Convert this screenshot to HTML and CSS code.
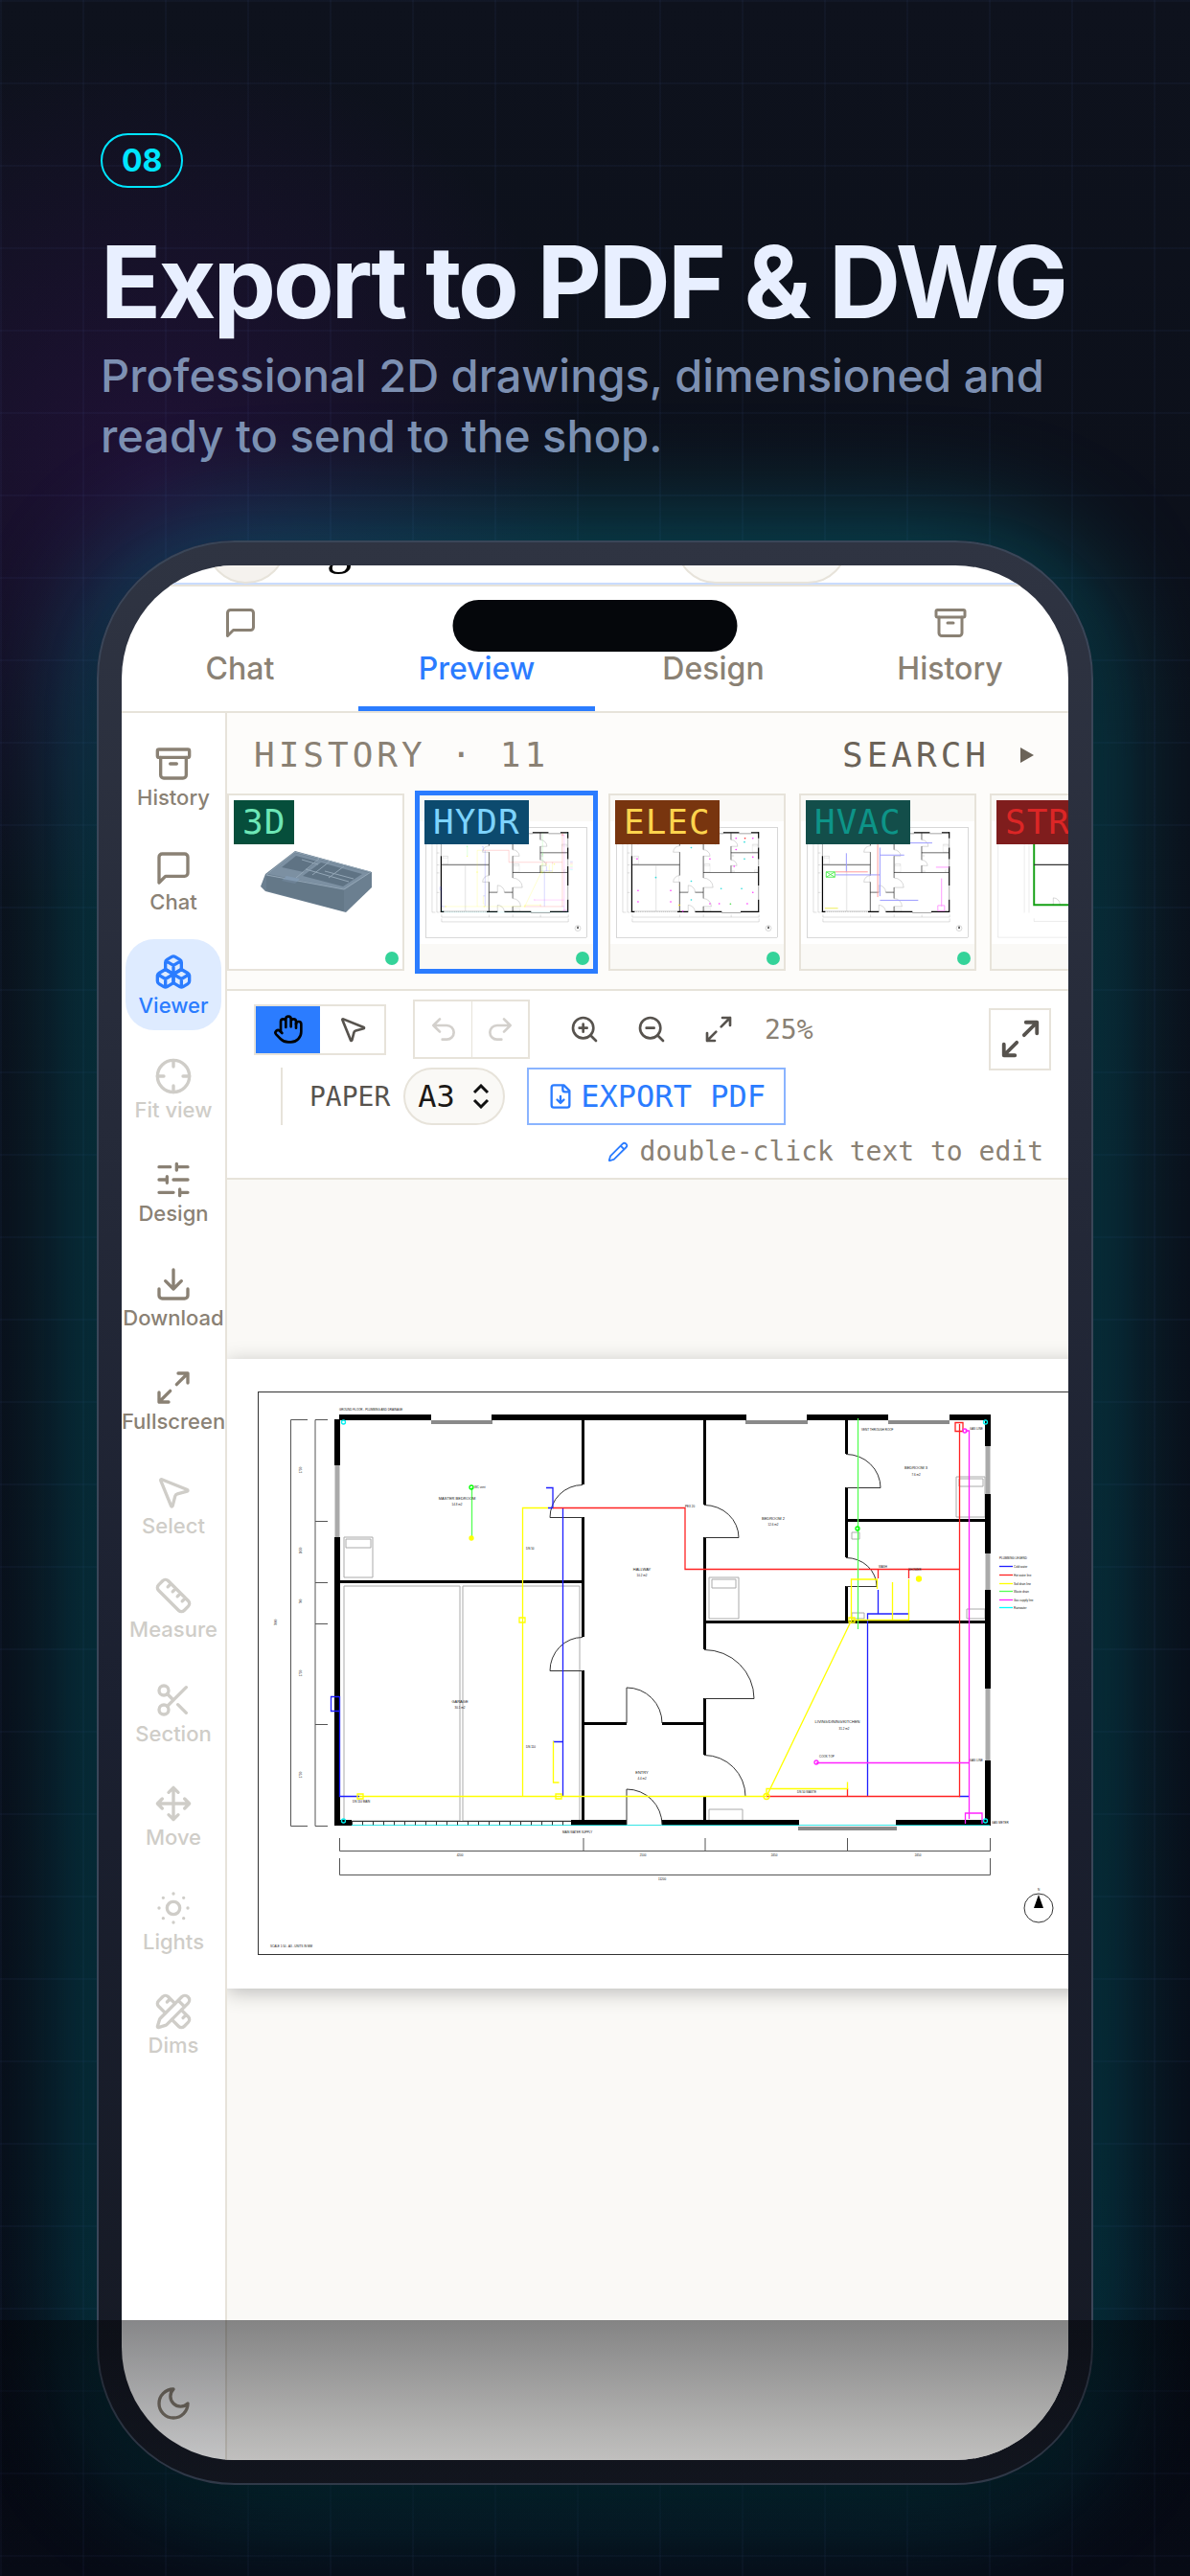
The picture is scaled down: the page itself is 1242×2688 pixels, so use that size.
FILE: index.html
```html
<!DOCTYPE html>
<html lang="en">
  <head>
    <meta charset="UTF-8" />
    <meta name="viewport" content="width=device-width, initial-scale=1.0" />
    <title>Export to PDF &amp; DWG</title>
    <link rel="stylesheet" href="styles.css" />
  </head>

  <body>
    <!-- shared icons and drawings -->
    <svg class="sprite" aria-hidden="true">
      <symbol id="i-chat" viewBox="0 0 24 24">
        <path d="M21 15a2 2 0 0 1-2 2H7l-4 4V5a2 2 0 0 1 2-2h14a2 2 0 0 1 2 2z" />
      </symbol>
      <symbol id="i-archive" viewBox="0 0 24 24">
        <rect x="2" y="3" width="20" height="5" rx="1" />
        <path d="M4 8v11a2 2 0 0 0 2 2h12a2 2 0 0 0 2-2V8M10 12h4" />
      </symbol>
      <symbol id="i-boxes" viewBox="0 0 24 24">
        <path d="M2.97 12.92A2 2 0 0 0 2 14.63v3.24a2 2 0 0 0 .97 1.71l3 1.8a2 2 0 0 0 2.06 0L12 19v-5.5l-5-3-4.03 2.42ZM7 16.5l-4.74-2.85M7 16.5l5-3M7 16.5v5.17" />
        <path d="M12 13.5V19l3.97 2.38a2 2 0 0 0 2.06 0l3-1.8a2 2 0 0 0 .97-1.71v-3.24a2 2 0 0 0-.97-1.71L17 10.5l-5 3ZM17 16.5l-5-3M17 16.5l4.74-2.85M17 16.5v5.17" />
        <path d="M7.97 4.42A2 2 0 0 0 7 6.13v4.37l5 3 5-3V6.13a2 2 0 0 0-.97-1.71l-3-1.8a2 2 0 0 0-2.06 0l-3 1.8ZM12 8 7.26 5.15M12 8l4.74-2.85M12 13.5V8" />
      </symbol>
      <symbol id="i-crosshair" viewBox="0 0 24 24">
        <circle cx="12" cy="12" r="10" />
        <path d="M22 12h-4M6 12H2M12 6V2M12 22v-4" />
      </symbol>
      <symbol id="i-sliders" viewBox="0 0 24 24">
        <path d="M21 4h-7M10 4H3M21 12h-9M8 12H3M21 20h-5M12 20H3M14 2v4M8 10v4M16 18v4" />
      </symbol>
      <symbol id="i-download" viewBox="0 0 24 24">
        <path d="M21 15v4a2 2 0 0 1-2 2H5a2 2 0 0 1-2-2v-4M7 10l5 5 5-5M12 15V3" />
      </symbol>
      <symbol id="i-expand" viewBox="0 0 24 24">
        <path d="M15 3h6v6M21 3l-7 7M3 21l7-7M9 21H3v-6" />
      </symbol>
      <symbol id="i-pointer" viewBox="0 0 24 24">
        <path d="M4.04 4.69a.5.5 0 0 1 .65-.65l16 6.5a.5.5 0 0 1-.06.95l-6.13 1.58a2 2 0 0 0-1.43 1.44l-1.58 6.12a.5.5 0 0 1-.95.06z" />
      </symbol>
      <symbol id="i-ruler" viewBox="0 0 24 24">
        <path d="M21.3 15.3a2.4 2.4 0 0 1 0 3.4l-2.6 2.6a2.4 2.4 0 0 1-3.4 0L2.7 8.7a2.41 2.41 0 0 1 0-3.4l2.6-2.6a2.41 2.41 0 0 1 3.4 0ZM14.5 12.5l2-2M11.5 9.5l2-2M8.5 6.5l2-2M17.5 15.5l2-2" />
      </symbol>
      <symbol id="i-scissors" viewBox="0 0 24 24">
        <circle cx="6" cy="6" r="3" />
        <circle cx="6" cy="18" r="3" />
        <path d="M8.12 8.12 12 12M20 4 8.12 15.88M14.8 14.8 20 20" />
      </symbol>
      <symbol id="i-move" viewBox="0 0 24 24">
        <path d="M12 2v20M15 19l-3 3-3-3M19 9l3 3-3 3M2 12h20M5 9l-3 3 3 3M9 5l3-3 3 3" />
      </symbol>
      <symbol id="i-sun" viewBox="0 0 24 24">
        <circle cx="12" cy="12" r="4" />
        <path d="M12 3h.01M12 21h.01M3 12h.01M21 12h.01M5.6 5.6h.01M18.4 5.6h.01M5.6 18.4h.01M18.4 18.4h.01" />
      </symbol>
      <symbol id="i-dims" viewBox="0 0 24 24">
        <path d="M13 7 8.7 2.7a2.41 2.41 0 0 0-3.4 0L2.7 5.3a2.41 2.41 0 0 0 0 3.4L7 13M8 6l2-2M18 16l2-2M17 11l4.3 4.3c.94.94.94 2.46 0 3.4l-2.6 2.6c-.94.94-2.46.94-3.4 0L11 17" />
        <path d="M21.17 6.81a1 1 0 0 0-3.99-3.99L3.84 16.17a2 2 0 0 0-.5.83l-1.32 4.35a.5.5 0 0 0 .62.62l4.35-1.32a2 2 0 0 0 .83-.5zM15 5l4 4" />
      </symbol>
      <symbol id="i-moon" viewBox="0 0 24 24">
        <path d="M12 3a6 6 0 0 0 9 9 9 9 0 1 1-9-9Z" />
      </symbol>
      <symbol id="i-hand" viewBox="0 0 24 24">
        <path d="M18 11V6a2 2 0 0 0-4 0M14 10V4a2 2 0 0 0-4 0v2M10 10.5V6a2 2 0 0 0-4 0v8" />
        <path d="M18 8a2 2 0 1 1 4 0v6a8 8 0 0 1-8 8h-2c-2.8 0-4.5-.86-5.99-2.34l-3.6-3.6a2 2 0 0 1 2.83-2.82L7 15" />
      </symbol>
      <symbol id="i-undo" viewBox="0 0 24 24">
        <path d="M9 14 4 9l5-5M4 9h10.5a5.5 5.5 0 0 1 0 11H11" />
      </symbol>
      <symbol id="i-redo" viewBox="0 0 24 24">
        <path d="m15 14 5-5-5-5M20 9H9.5a5.5 5.5 0 0 0 0 11H13" />
      </symbol>
      <symbol id="i-zoom-in" viewBox="0 0 24 24">
        <circle cx="11" cy="11" r="8" />
        <path d="m21 21-4.35-4.35M11 8v6M8 11h6" />
      </symbol>
      <symbol id="i-zoom-out" viewBox="0 0 24 24">
        <circle cx="11" cy="11" r="8" />
        <path d="m21 21-4.35-4.35M8 11h6" />
      </symbol>
      <symbol id="i-file-down" viewBox="0 0 24 24">
        <path d="M15 2H6a2 2 0 0 0-2 2v16a2 2 0 0 0 2 2h12a2 2 0 0 0 2-2V7ZM14 2v4a2 2 0 0 0 2 2h4M12 18v-6M9 15l3 3 3-3" />
      </symbol>
      <symbol id="i-pencil" viewBox="0 0 24 24">
        <path d="M21.17 6.81a1 1 0 0 0-3.99-3.99L3.84 16.17a2 2 0 0 0-.5.83l-1.32 4.35a.5.5 0 0 0 .62.62l4.35-1.32a2 2 0 0 0 .83-.5zM15 5l4 4" />
      </symbol>

      <!-- floor plan without services -->
      <symbol id="plan" viewBox="237 1419 929 657">
        <rect x="237" y="1419" width="929" height="657" fill="#fff" />
        <rect x="269.5" y="1453.5" width="864" height="587" class="thin" />
        <g class="furniture">
          <path d="M359 1605h30v42h-30zM361 1607h26v9h-26zM359 1656h121v245H359zM483 1656h122v245H483z" />
          <path d="M740 1647h31v43h-31zM743 1649h25v9h-25zM998 1542h30v42h-30zM1001 1544h25v8h-25z" />
          <path d="M1009 1680h19v10h-19zM740 1889h35v12h-35zM889 1600h8v7h-8zM889 1684h13v6h-13z" />
        </g>
        <g class="window">
          <path d="M450 1485h64M778 1485h65M927 1485h64M833 1909h103" />
          <path d="M352 1530v75M1031 1510v50M1031 1622v38M1031 1763v75" class="wide" />
        </g>
        <g class="outer">
          <path d="M354 1480h96M513 1480h266M842 1480h85M991 1480h42" />
          <path d="M352 1482v48M352 1605v301M1031 1477v33M1031 1560v62M1031 1660v103M1031 1838v68" />
          <path d="M349 1903h18M596 1903h58M691 1903h143M935 1903h98" />
        </g>
        <path class="hatch" d="M367 1903.5h229" />
        <path class="thin" d="M367 1901.5h229" />
        <g class="inner">
          <path d="M608.5 1482v68M608.5 1584v125M608.5 1744v162M735.5 1482v89M735.5 1605v117M735.5 1773v59M735.5 1875v31" />
          <path d="M883.5 1482v36M883.5 1553v73M883.5 1656v38" />
          <path d="M355 1651.5h253M883 1587.5h146M735 1693.5h294M608 1799.5h46M691 1799.5h44" />
        </g>
        <g class="thin">
          <path d="M608 1584.5h-34a34 34 0 0 1 34-34M608 1744.5h-34a34 35 0 0 1 34-35" />
          <path d="M735 1605.5h36a36 34 0 0 0-36-34M735 1773.5h52a52 51 0 0 0-52-51M735 1875.5h43a43 43 0 0 0-43-43" />
          <path d="M883 1553.5h36a36 35 0 0 0-36-35M883 1656.5h32a32 30 0 0 0-32-30" />
          <path d="M654 1799v-37a37 37 0 0 1 37 37M654 1905v-37a37 37 0 0 1 37 37" />
        </g>
        <g class="dim">
          <path d="M321 1482.5h-17.5v424H321" />
          <path d="M342 1482.5h-13v424h13M329 1588.5h13M329 1652.5h13M329 1695.5h13M329 1800.5h13" />
          <path d="M354.5 1919v13.5h679V1919M609 1919v13M736 1919v13M884.5 1919v13" />
          <path d="M354.5 1940v17.5h679V1940" />
        </g>
        <circle cx="1084" cy="1992" r="15" class="thin" />
        <path d="M1084 1978l5 14h-10z" fill="#000" />
      </symbol>

      <!-- water and drainage layer -->
      <symbol id="plumbing" viewBox="237 1419 929 657">
        <g class="pipe">
          <path stroke="#0dd" stroke-width=".8" d="M367 1905.5h666" />
          <path stroke="#1f1fff" d="M587.5 1574v301M570 1553.5h7v21h-5M577 1818.5h10M354 1771.5h-8.5v15h8.5M354.5 1771v104.5H375M905.5 1875v-190H948M916.5 1660v25M1001 1875.5h10" />
          <path stroke="#f22" d="M577 1574.5h138v64h286M1001.5 1487v388.5H800M884.5 1875v-8M916.5 1638v10M948.5 1638v10M997 1485.5h8v9h-8z" />
          <path stroke="#f2f" d="M1011.5 1899v-405h-4M852 1840.5h159M1007.5 1904v-11H1025v11" />
          <circle stroke="#f2f" cx="1007" cy="1494" r="2" />
          <circle stroke="#f2f" cx="852" cy="1840" r="2" />
          <path stroke="#5f5" d="M895.5 1481v220M492.5 1553v53" />
          <circle stroke="#0f0" cx="492" cy="1553" r="2" />
          <circle stroke="#0f0" cx="895" cy="1596" r="2" />
          <path stroke="#ff0" d="M572 1574.5h-26.5v301M375 1875.5h425l89-184.5M577.5 1818v43h6M888.5 1691v-42h27v10M931.5 1652v39M948.5 1649v42.5H889M800 1875v-7.5h84.5v-7" />
          <g stroke="#ff0">
            <path d="M373 1873h6v5h-6zM542 1689h6v5h-6zM580 1873h6v5h-6zM886 1689h6v5h-6z" />
            <circle cx="800" cy="1875.5" r="3" />
            <circle cx="959" cy="1648.5" r="2.5" fill="#ff0" />
            <circle cx="492" cy="1606" r="2" fill="#ff0" />
          </g>
          <g stroke="#0ee">
            <circle cx="358.5" cy="1485" r="2" />
            <circle cx="358.5" cy="1901" r="2" />
            <circle cx="1028.5" cy="1485" r="2" />
            <circle cx="1028.5" cy="1901" r="2" />
          </g>
          <path stroke="#1f1fff" d="M1043 1635.5h14" />
          <path stroke="#f22" d="M1043 1644.5h14" />
          <path stroke="#ff0" d="M1043 1653.5h14" />
          <path stroke="#5f5" d="M1043 1661.5h14" />
          <path stroke="#f2f" d="M1043 1670.5h14" />
          <path stroke="#0ff" d="M1043 1678.5h14" />
        </g>
      </symbol>

      <!-- sockets and lamps -->
      <symbol id="electric" viewBox="237 1419 929 657">
        <g class="spots">
          <path stroke="#f4f" d="M385 1540h1M380 1620h1M385 1790h1M385 1850h1M560 1790h1M560 1850h1M625 1900h1M770 1500h1M770 1620h1M910 1510h1M1000 1510h1M910 1570h1M900 1660h1M1000 1610h1M770 1860h1M820 1860h1M970 1860h1M1000 1800h1" />
          <path stroke="#3dd" d="M480 1530h1M480 1720h1M670 1560h1M670 1740h1M670 1840h1M800 1540h1M955 1530h1M955 1620h1M830 1780h1M940 1780h1" />
          <path stroke="#f33" d="M810 1515h1M958 1510h1" />
          <path stroke="#fd2" d="M606 1868h1" />
          <path stroke="#5d5" d="M880 1862h1" />
        </g>
      </symbol>

      <!-- ducts -->
      <symbol id="ducts" viewBox="237 1419 929 657">
        <g class="duct">
          <path stroke="#99f" d="M480 1590v100M420 1706h240M660 1560v260M660 1842h205M660 1600h130M790 1535h150" />
          <path stroke="#f99" d="M420 1690h175M648 1540v285" />
          <path stroke="#f9f" d="M960 1665h70M990 1725v150M970 1870h36v28h-36z" />
          <path stroke="#5e5" d="M372 1690h46v28h-46zM372 1690l46 28M418 1690l-46 28" />
          <path stroke="#ee5" d="M365 1885h70" />
        </g>
      </symbol>
    </svg>

    <main class="poster">
      <header class="intro">
        <span class="step">08</span>
        <h1>Export to PDF &amp; DWG</h1>
        <p>Professional 2D drawings, dimensioned and ready to send to the shop.</p>
      </header>

      <div class="phone">
        <div class="island"></div>
        <div class="screen">
          <div class="topbar">
            <span class="avatar"></span>
            <span class="brand">g</span>
            <span class="pill"></span>
          </div>

          <nav class="tabs">
            <button type="button"><svg class="icon"><use href="#i-chat" /></svg>Chat</button>
            <button type="button" class="active"><svg class="icon"></svg>Preview</button>
            <button type="button"><svg class="icon"></svg>Design</button>
            <button type="button"><svg class="icon"><use href="#i-archive" /></svg>History</button>
          </nav>

          <div class="workspace">
            <aside class="rail">
              <div class="rail-list">
                <button type="button"><svg class="icon"><use href="#i-archive" /></svg>History</button>
                <button type="button"><svg class="icon"><use href="#i-chat" /></svg>Chat</button>
                <button type="button" class="active"><svg class="icon"><use href="#i-boxes" /></svg>Viewer</button>
                <button type="button" disabled><svg class="icon"><use href="#i-crosshair" /></svg>Fit view</button>
                <button type="button"><svg class="icon"><use href="#i-sliders" /></svg>Design</button>
                <button type="button"><svg class="icon"><use href="#i-download" /></svg>Download</button>
                <button type="button"><svg class="icon"><use href="#i-expand" /></svg>Fullscreen</button>
                <button type="button" disabled><svg class="icon"><use href="#i-pointer" /></svg>Select</button>
                <button type="button" disabled><svg class="icon"><use href="#i-ruler" /></svg>Measure</button>
                <button type="button" disabled><svg class="icon"><use href="#i-scissors" /></svg>Section</button>
                <button type="button" disabled><svg class="icon"><use href="#i-move" /></svg>Move</button>
                <button type="button" disabled><svg class="icon"><use href="#i-sun" /></svg>Lights</button>
                <button type="button" disabled><svg class="icon"><use href="#i-dims" /></svg>Dims</button>
              </div>
              <button type="button" class="theme" aria-label="Dark mode"><svg class="icon"><use href="#i-moon" /></svg></button>
            </aside>

            <section class="main">
              <div class="history">
                <div class="history-head">
                  <h2>HISTORY · 11</h2>
                  <button type="button" class="search">SEARCH <i class="caret"></i></button>
                </div>
                <div class="thumbs">
                  <button type="button" class="thumb model">
                    <svg viewBox="0 0 181 181">
                      <path fill="#6b7f90" d="M69 58l80 22v16l-27 26-84-22-5-5 5-13z" />
                      <path fill="#7c90a2" d="M69 60l78 21-26 17-80-16z" />
                      <path fill="#5f7384" d="M70 63l22 6-14 11-23-5zM96 70l43 12-20 13-42-11z" />
                      <path fill="none" stroke="#93a6b6" d="M69 59l79 21-28 18-81-15zM94 66l-24 20M80 77l45 13M105 69l-18 14M120 74l-16 12M76 67l17 5M100 79l30 8" />
                      <path fill="#8299b0" d="M60 84l14 3-5 5-14-3z" />
                      <path fill="#5f7384" d="M39 84l81 15v22l-81-22z" opacity=".6" />
                    </svg>
                    <span class="tag green">3D</span><i class="dot"></i>
                  </button>
                  <button type="button" class="thumb selected">
                    <svg viewBox="0 0 929 657"><use href="#plan" /><use href="#plumbing" opacity=".7" /></svg>
                    <span class="tag blue">HYDR</span><i class="dot"></i>
                  </button>
                  <button type="button" class="thumb">
                    <svg viewBox="0 0 929 657"><use href="#plan" /><use href="#electric" /></svg>
                    <span class="tag amber">ELEC</span><i class="dot"></i>
                  </button>
                  <button type="button" class="thumb">
                    <svg viewBox="0 0 929 657"><use href="#plan" /><use href="#ducts" /></svg>
                    <span class="tag teal">HVAC</span><i class="dot"></i>
                  </button>
                  <button type="button" class="thumb">
                    <svg viewBox="0 0 929 657">
                      <rect width="929" height="657" fill="#fff" />
                      <path class="thin" d="M34 34h865v588H34zM175 100v390M200 100v390M227 520v16h600" opacity=".5" />
                      <path class="frame" d="M227 60h600v388H227z" />
                      <path class="pipe-wide" stroke="#eb4" d="M227 233h260" />
                      <path class="thin" d="M330 448v-38a36 36 0 0 1 36 38" />
                    </svg>
                    <span class="tag red">STRUC</span><i class="dot"></i>
                  </button>
                </div>
              </div>

              <div class="toolbar">
                <div class="tool-row">
                  <div class="group modes">
                    <button type="button" class="active" aria-label="Pan"><svg class="icon"><use href="#i-hand" /></svg></button>
                    <button type="button" aria-label="Pick"><svg class="icon"><use href="#i-pointer" /></svg></button>
                  </div>
                  <div class="group undo">
                    <button type="button" disabled aria-label="Undo"><svg class="icon"><use href="#i-undo" /></svg></button>
                    <button type="button" disabled aria-label="Redo"><svg class="icon"><use href="#i-redo" /></svg></button>
                  </div>
                  <div class="zoom">
                    <button type="button" aria-label="Zoom in"><svg class="icon"><use href="#i-zoom-in" /></svg></button>
                    <button type="button" aria-label="Zoom out"><svg class="icon"><use href="#i-zoom-out" /></svg></button>
                    <button type="button" aria-label="Fit"><svg class="icon"><use href="#i-expand" /></svg></button>
                    <output>25%</output>
                  </div>
                  <button type="button" class="maximize" aria-label="Maximize"><svg class="icon"><use href="#i-expand" /></svg></button>
                </div>
                <div class="tool-row paper-row">
                  <label for="paper">PAPER</label>
                  <span class="select">
                    <select id="paper">
                      <option>A3</option>
                    </select>
                    <svg class="chevrons" viewBox="0 0 18 26"><path d="M2 9l7-7 7 7M2 17l7 7 7-7" /></svg>
                  </span>
                  <button type="button" class="export"><svg class="icon"><use href="#i-file-down" /></svg>EXPORT PDF</button>
                </div>
                <p class="hint"><svg class="icon"><use href="#i-pencil" /></svg>double-click text to edit</p>
              </div>

              <div class="canvas">
                <svg class="sheet" viewBox="237 1419 929 657">
                  <use href="#plan" x="237" y="1419" width="929" height="657" />
                  <use href="#plumbing" x="237" y="1419" width="929" height="657" />
                  <g class="note">
                    <text x="354" y="1473">GROUND FLOOR - PLUMBING AND DRAINAGE</text>
                    <text x="282" y="2033">SCALE 1:50 - A3 - UNITS IN MM</text>
                    <text x="587" y="1914">MAIN WATER SUPPLY</text>
                    <text x="1043" y="1628">PLUMBING LEGEND</text>
                    <text x="1058" y="1637">Cold water</text>
                    <text x="1058" y="1646">Hot water line</text>
                    <text x="1058" y="1655">Soil drain line</text>
                    <text x="1058" y="1663">Waste drain</text>
                    <text x="1058" y="1672">Gas supply line</text>
                    <text x="1058" y="1680">Rainwater</text>
                    <text x="899" y="1494">VENT THROUGH ROOF</text>
                    <text x="495" y="1554">WC vent</text>
                    <text x="549" y="1618">DN 50</text>
                    <text x="549" y="1825">DN 110</text>
                    <text x="715" y="1574">PEX 20</text>
                    <text x="855" y="1835">COOK TOP</text>
                    <text x="1012" y="1493">GAS LINE</text>
                    <text x="1012" y="1839">GAS LINE</text>
                    <text x="917" y="1637">WASH</text>
                    <text x="948" y="1640">SHOWER</text>
                    <text x="832" y="1872">DN 50 WASTE</text>
                    <text x="1035" y="1904">GAS METER</text>
                    <text x="368" y="1882">DN 110 MAIN</text>
                    <g class="mid">
                      <text x="477" y="1566" class="room">MASTER BEDROOM</text>
                      <text x="477" y="1572">14.8 m2</text>
                      <text x="670" y="1640" class="room">HALLWAY</text>
                      <text x="670" y="1646">10.2 m2</text>
                      <text x="480" y="1778" class="room">GARAGE</text>
                      <text x="480" y="1784">30.1 m2</text>
                      <text x="670" y="1852" class="room">ENTRY</text>
                      <text x="670" y="1858">4.4 m2</text>
                      <text x="807" y="1587" class="room">BEDROOM 2</text>
                      <text x="807" y="1593">12.6 m2</text>
                      <text x="956" y="1534" class="room">BEDROOM 3</text>
                      <text x="956" y="1541">7.6 m2</text>
                      <text x="874" y="1799" class="room">LIVING/DINING/KITCHEN</text>
                      <text x="881" y="1806">31.2 m2</text>
                      <text x="480" y="1938">4200</text>
                      <text x="671" y="1938">2100</text>
                      <text x="808" y="1938">2450</text>
                      <text x="958" y="1938">2450</text>
                      <text x="691" y="1963">11200</text>
                      <text x="1084" y="1974">N</text>
                      <text transform="translate(315 1535) rotate(-90)">1750</text>
                      <text transform="translate(315 1619) rotate(-90)">1050</text>
                      <text transform="translate(315 1672) rotate(-90)">700</text>
                      <text transform="translate(315 1747) rotate(-90)">1750</text>
                      <text transform="translate(315 1853) rotate(-90)">1750</text>
                      <text transform="translate(289 1694) rotate(-90)">7000</text>
                    </g>
                  </g>
                </svg>
              </div>
            </section>
          </div>
        </div>
      </div>
      <div class="fade"></div>
    </main>
  </body>
</html>
```
FILE: styles.css
```css
:root {
  --line: #e7e3da;
  --muted: #8a8174;
  --ink: #57534e;
  --accent: #2b7cff;
  --paper: #faf9f6;
  --mono: "DejaVu Sans Mono", monospace;
}

* {
  box-sizing: border-box;
  margin: 0;
  padding: 0;
}

body {
  background-color: #0b0f19;
  font-family: Inter, sans-serif;
}

button,
select {
  background: none;
  border: 0;
  color: inherit;
  font: inherit;
}

.sprite {
  height: 0;
  position: absolute;
  width: 0;
}

.icon {
  display: block;
  fill: none;
  flex: none;
  height: 32px;
  stroke: currentColor;
  stroke-linecap: round;
  stroke-linejoin: round;
  stroke-width: 2;
  width: 32px;
}

/* poster */
.poster {
  background-image:
    linear-gradient(rgba(90, 120, 200, 0.05) 2px, transparent 2px),
    linear-gradient(90deg, rgba(90, 120, 200, 0.05) 2px, transparent 2px),
    radial-gradient(circle 460px at 160px 500px, rgba(100, 20, 150, 0.22), transparent),
    linear-gradient(#0e121d, #0b0f19 30%, #070b16);
  background-size: 86px 86px, 86px 86px, auto, auto;
  display: flex;
  flex-direction: column;
  min-height: 100vh;
  overflow: hidden;
  padding: 139px 101px 95px;
  position: relative;
}

.intro {
  padding: 0 4px;
}

.step {
  border: 2px solid #00e5ff;
  border-radius: 29px;
  color: #00e5ff;
  display: inline-block;
  font-size: 32px;
  font-weight: 700;
  line-height: 53px;
  padding: 0 20px;
}

h1 {
  color: #e8efff;
  font-size: 104px;
  font-weight: 700;
  letter-spacing: -3px;
  line-height: 108px;
  margin-top: 44px;
  white-space: nowrap;
}

.intro p {
  color: #7d90b2;
  font-size: 47px;
  font-weight: 500;
  line-height: 63px;
  margin-top: 12px;
}

.phone {
  background: linear-gradient(#2f3442, #1b2030 60%, #151923);
  border: 2px solid #3a4658;
  border-radius: 144px;
  box-shadow: 0 24px 50px rgba(0, 0, 0, 0.35), 0 0 130px rgba(0, 229, 255, 0.36);
  display: flex;
  flex: 1;
  flex-direction: column;
  margin-top: 78px;
  padding: 24px;
  position: relative;
}

.island {
  background-color: #05070b;
  border-radius: 27px;
  height: 54px;
  left: 50%;
  position: absolute;
  top: 60px;
  transform: translateX(-50%);
  width: 297px;
  z-index: 2;
}

.screen {
  background-color: #fff;
  border-radius: 118px;
  display: flex;
  flex: 1;
  flex-direction: column;
  overflow: hidden;
}

.fade {
  background: linear-gradient(rgba(3, 4, 8, 0.48), rgba(3, 4, 8, 0.03));
  bottom: 0;
  height: 267px;
  left: 0;
  position: absolute;
  right: 0;
}

/* scrolled header */
.topbar {
  align-items: flex-end;
  border-bottom: 2px solid var(--line);
  box-shadow: inset 0 -2px #c9dcff;
  display: flex;
  flex: none;
  height: 22px;
  overflow: hidden;
  padding: 0 230px 1px 88px;
}

.avatar,
.pill {
  background-color: #f5f2ee;
  border: 2px solid var(--line);
  border-radius: 44px;
  height: 84px;
  width: 84px;
}

.brand {
  font: 52px/40px "Liberation Serif", serif;
  margin: 0 0 18px 42px;
}

.pill {
  background-color: var(--paper);
  margin-left: auto;
  width: 180px;
}

.tabs {
  border-bottom: 2px solid var(--line);
  display: flex;
  flex: none;
}

.tabs button {
  align-items: center;
  border-bottom: 5px solid transparent;
  color: var(--muted);
  display: flex;
  flex: 1;
  flex-direction: column;
  font-size: 32px;
  font-weight: 500;
  gap: 10px;
  line-height: 40px;
  padding: 20px 0 19px;
}

.tabs .active {
  border-color: var(--accent);
  color: var(--accent);
}

.tabs .icon {
  height: 36px;
  width: 36px;
}

.workspace {
  display: flex;
  flex: 1;
  min-height: 0;
}

/* left rail */
.rail {
  align-items: center;
  border-right: 2px solid var(--line);
  color: var(--muted);
  display: flex;
  flex: none;
  flex-direction: column;
  justify-content: space-between;
  padding: 19px 4px 29px;
  width: 110px;
}

.rail-list {
  display: flex;
  flex-direction: column;
  height: 1397px;
  justify-content: space-between;
  width: 100%;
}

.rail button {
  align-items: center;
  border-radius: 30px;
  display: flex;
  flex-direction: column;
  font-size: 22px;
  font-weight: 500;
  gap: 1px;
  height: 95px;
  line-height: 28px;
  padding-top: 14px;
}

.rail .active {
  background-color: #deebff;
  color: var(--accent);
}

.rail button:disabled {
  color: #cfcdc8;
}

.rail .icon {
  height: 40px;
  width: 40px;
}

.rail .theme {
  height: 64px;
}

/* history strip */
.main {
  display: flex;
  flex: 1;
  flex-direction: column;
  min-width: 0;
}

.history {
  background-color: #fdfcfa;
  border-bottom: 2px solid var(--line);
  padding-bottom: 15px;
}

.history-head {
  align-items: center;
  color: var(--muted);
  display: flex;
  font-family: var(--mono);
  font-size: 36px;
  justify-content: space-between;
  letter-spacing: 4px;
  line-height: 44px;
  padding: 22px 36px 18px 28px;
}

.history h2 {
  font-size: 36px;
  font-weight: 400;
}

.search {
  align-items: center;
  color: #6b6358;
  display: flex;
  gap: 32px;
  letter-spacing: 4px;
}

.caret {
  border: 8px solid transparent;
  border-left: 14px solid #6b6358;
  border-right: 0;
}

.thumbs {
  display: flex;
  gap: 14px;
  overflow: hidden;
  margin-top: -4px;
  padding: 4px 0;
}

.thumb {
  align-items: center;
  background-color: var(--paper);
  border: 2px solid var(--line);
  display: flex;
  flex: none;
  height: 185px;
  position: relative;
  width: 185px;
}

.thumb svg {
  display: block;
  width: 100%;
}

.model {
  background-color: #fff;
}

.selected {
  border-color: var(--accent);
  box-shadow: 0 0 0 3px var(--accent);
}

.tag {
  font-family: var(--mono);
  font-size: 36px;
  left: 5px;
  letter-spacing: 1px;
  line-height: 46px;
  padding: 0 9px;
  position: absolute;
  top: 5px;
}

.green {
  background-color: #064e3b;
  color: #6ee7b7;
}

.blue {
  background-color: #0c4a6e;
  color: #7dd3fc;
}

.amber {
  background-color: #78350f;
  color: #fcd34d;
}

.teal {
  background-color: #134e4a;
  color: #0d9488;
}

.red {
  background-color: #7f1d1d;
  color: #dc2626;
}

.dot {
  background-color: #34d399;
  border-radius: 50%;
  bottom: 4px;
  height: 14px;
  position: absolute;
  right: 4px;
  width: 14px;
}

/* toolbar */
.toolbar {
  border-bottom: 2px solid var(--line);
  color: var(--ink);
  font-family: var(--mono);
  font-size: 28px;
  padding: 9px 18px 9px 28px;
}

.tool-row {
  align-items: center;
  display: flex;
}

.group {
  border: 2px solid var(--line);
  display: flex;
}

.group button {
  display: grid;
  height: 49px;
  place-items: center;
  width: 67px;
}

.modes .active {
  background-color: var(--accent);
  color: #000;
}

.undo {
  margin-left: 28px;
}

.undo button {
  height: 58px;
  width: 59px;
}

.undo button + button {
  border-left: 1px solid var(--line);
}

.undo button:disabled {
  color: #d3d0cc;
}

.zoom {
  align-items: center;
  color: var(--muted);
  display: flex;
  gap: 38px;
  margin-left: 41px;
}

.zoom button {
  color: var(--ink);
}

.zoom output {
  margin-left: -6px;
}

.maximize {
  border: 2px solid var(--line);
  display: grid;
  height: 65px;
  margin-left: auto;
  margin-bottom: -20px;
  place-items: center;
  width: 65px;
}

.maximize .icon {
  height: 46px;
  width: 46px;
}

.paper-row {
  border-left: 2px solid var(--line);
  height: 60px;
  margin: 9px 0 0 28px;
  padding-left: 28px;
}

.select {
  align-items: center;
  background-color: var(--paper);
  border: 2px solid var(--line);
  border-radius: 30px;
  display: flex;
  height: 60px;
  margin-left: 14px;
  position: relative;
  width: 106px;
}

.select select {
  appearance: none;
  color: #1c1917;
  font-size: 32px;
  height: 100%;
  padding-left: 13px;
  width: 100%;
}

.chevrons {
  fill: none;
  height: 26px;
  pointer-events: none;
  position: absolute;
  right: 14px;
  stroke: #111;
  stroke-width: 3;
  width: 18px;
}

.export {
  align-items: center;
  border: 2px solid #8ab4ff;
  color: var(--accent);
  display: flex;
  font-size: 32px;
  gap: 7px;
  height: 60px;
  margin-left: 23px;
  padding: 0 19px;
}

.export .icon {
  height: 28px;
  width: 28px;
}

.hint {
  align-items: center;
  color: var(--muted);
  display: flex;
  gap: 12px;
  justify-content: flex-end;
  line-height: 36px;
  margin-top: 10px;
  padding-right: 8px;
}

.hint .icon {
  color: var(--accent);
  height: 22px;
  width: 22px;
}

/* drawing sheet */
.canvas {
  background-color: var(--paper);
  flex: 1;
  overflow: hidden;
  padding-top: 187px;
}

.sheet {
  box-shadow: 0 4px 20px rgba(0, 0, 0, 0.25);
  display: block;
  height: 657px;
  width: 929px;
}

.thin,
.dim,
.furniture,
.window,
.outer,
.inner,
.hatch,
.pipe,
.duct,
.spots,
.frame,
.pipe-wide {
  fill: none;
  stroke: #333;
  stroke-width: 1;
}

.dim {
  stroke: #555;
}

.furniture {
  stroke: #aaa;
}

.window {
  stroke: #8a8a8a;
  stroke-width: 4;
}

.window .wide {
  stroke: #aaa;
  stroke-width: 5;
}

.outer {
  stroke: #000;
  stroke-width: 6;
}

.inner {
  stroke: #000;
  stroke-width: 3;
}

.hatch {
  stroke-dasharray: 1 10;
  stroke-width: 5;
}

.pipe {
  stroke-width: 1.3;
}

.duct {
  stroke-width: 5;
}

.spots {
  stroke-linecap: round;
  stroke-width: 8;
}

.frame {
  stroke: #14a014;
  stroke-width: 10;
}

.pipe-wide {
  stroke-width: 6;
}

.note {
  fill: #111;
  font-family: "Liberation Sans", sans-serif;
  font-size: 3px;
}

.note .mid {
  text-anchor: middle;
}

.note .room {
  font-size: 4px;
}
```
